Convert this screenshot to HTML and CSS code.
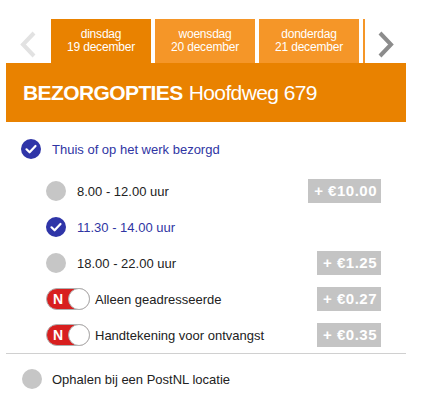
FILE: index.html
```html
<!DOCTYPE html>
<html>
<head>
<meta charset="utf-8">
<link rel="stylesheet" href="styles.css">
</head>
<body>
<div class="panel">
  <div class="nav">
    <div class="arrow prev">
      <svg width="17" height="27" viewBox="0 0 17 27"><path d="M14 2 L3 13.5 L14 25" fill="none" stroke="#e2e2e2" stroke-width="4"/></svg>
    </div>
    <div class="tabs">
      <div class="tab active"><span>dinsdag</span><span>19 december</span></div>
      <div class="tab"><span>woensdag</span><span>20 december</span></div>
      <div class="tab"><span>donderdag</span><span>21 december</span></div>
      <div class="tab"></div>
    </div>
    <div class="arrow next">
      <svg width="17" height="27" viewBox="0 0 17 27"><path d="M3 2 L14 13.5 L3 25" fill="none" stroke="#8c8c8c" stroke-width="4"/></svg>
    </div>
  </div>
  <div class="header"><b>BEZORGOPTIES</b> Hoofdweg 679</div>
  <div class="options">
    <div class="row main selected">
      <span class="radio checked"><svg width="20" height="20" viewBox="0 0 20 20"><path d="M5.5 10.3 L8.6 13.3 L14.5 7" fill="none" stroke="#fff" stroke-width="2.2" stroke-linecap="round" stroke-linejoin="round"/></svg></span>
      <span class="label">Thuis of op het werk bezorgd</span>
    </div>
    <div class="sub">
      <div class="row">
        <span class="radio"></span>
        <span class="label">8.00 - 12.00 uur</span>
        <span class="price">+ €10.00</span>
      </div>
      <div class="row selected">
        <span class="radio checked"><svg width="20" height="20" viewBox="0 0 20 20"><path d="M5.5 10.3 L8.6 13.3 L14.5 7" fill="none" stroke="#fff" stroke-width="2.2" stroke-linecap="round" stroke-linejoin="round"/></svg></span>
        <span class="label">11.30 - 14.00 uur</span>
      </div>
      <div class="row">
        <span class="radio"></span>
        <span class="label">18.00 - 22.00 uur</span>
        <span class="price">+ €1.25</span>
      </div>
      <div class="row toggle-row">
        <span class="toggle"><span class="n">N</span><span class="knob"></span></span>
        <span class="label">Alleen geadresseerde</span>
        <span class="price">+ €0.27</span>
      </div>
      <div class="row toggle-row">
        <span class="toggle"><span class="n">N</span><span class="knob"></span></span>
        <span class="label">Handtekening voor ontvangst</span>
        <span class="price">+ €0.35</span>
      </div>
    </div>
    <div class="row main last">
      <span class="radio"></span>
      <span class="label">Ophalen bij een PostNL locatie</span>
    </div>
  </div>
</div>
</body>
</html>
```

FILE: styles.css
```css
* { box-sizing: border-box; }
body {
  margin: 0;
  background: #fff;
  font-family: "Liberation Sans", Arial, Helvetica, sans-serif;
  color: #222;
}
.panel {
  width: 400px;
  margin: 19px 0 0 6px;
}
.nav {
  display: flex;
  height: 44px;
}
.arrow {
  display: flex;
  align-items: center;
  justify-content: center;
  padding-top: 6px;
}
.prev { width: 45px; }
.next { flex: 1; }
.tabs {
  display: flex;
  gap: 4px;
  width: 314px;
  overflow: hidden;
}
.tab {
  flex: 0 0 100px;
  background: #f59628;
  color: #fff;
  font-size: 12px;
  line-height: 13px;
  display: flex;
  flex-direction: column;
  align-items: center;
  justify-content: center;
  padding-bottom: 1px;
  letter-spacing: -0.2px;
}
.tab.active { background: #e98200; }
.header {
  background: #e98200;
  color: #fff;
  height: 59px;
  display: flex;
  align-items: center;
  padding-left: 17px;
  font-size: 21px;
  letter-spacing: -0.6px;
}
.header b { margin-right: 6px; }
.options {
  padding-top: 16px;
}
.row {
  display: flex;
  align-items: center;
  font-size: 13px;
}
.row.selected .label { color: #2f35a3; }
.main {
  height: 22px;
  padding-left: 15px;
}
.main .label { margin-left: 11px; }
.radio {
  width: 20px;
  height: 20px;
  border-radius: 50%;
  background: #c6c6c6;
  flex: 0 0 20px;
  display: flex;
}
.radio.checked { background: #2f35a8; }
.sub {
  padding: 13px 25px 0 40px;
  border-bottom: 1px solid #d0d0d0;
}
.sub .row {
  height: 36px;
}
.sub .radio { margin-right: 11px; }
.price {
  margin-left: auto;
  background: #c4c4c4;
  color: #fff;
  font-weight: bold;
  font-size: 15px;
  letter-spacing: 0.5px;
  height: 24px;
  line-height: 24px;
  padding: 0 4px 0 6px;
}
.toggle {
  width: 44px;
  height: 22px;
  border-radius: 11px;
  background: #d81f1f;
  border: 1px solid #b0b0b0;
  display: flex;
  align-items: center;
  margin-right: 5px;
}
.toggle .n {
  color: #fff;
  font-weight: bold;
  font-size: 14px;
  width: 20px;
  text-align: center;
  padding-left: 2px;
}
.knob {
  width: 22px;
  height: 22px;
  border-radius: 50%;
  background: #fff;
  border: 1px solid #b0b0b0;
  margin-left: auto;
  margin-right: -1px;
}
.last {
  margin-top: 14px;
  padding-left: 16px;
}
.last .label { margin-left: 10px; }
```
